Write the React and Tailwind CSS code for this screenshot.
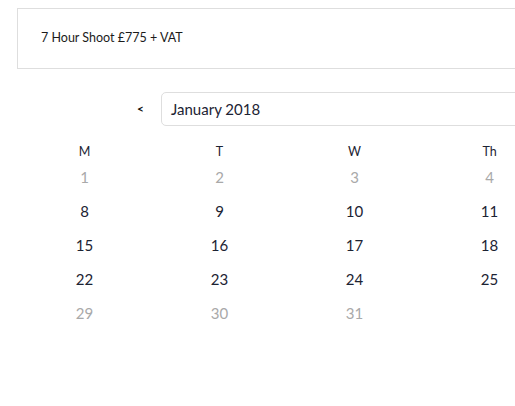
import React from "react";

const weeks = [
  [["1", true], ["2", true], ["3", true], ["4", true]],
  [["8"], ["9"], ["10"], ["11"]],
  [["15"], ["16"], ["17"], ["18"]],
  [["22"], ["23"], ["24"], ["25"]],
  [["29", true], ["30", true], ["31", true], [""]],
];

export default function App() {
  return (
    <div className="w-[515px] h-[406px] overflow-hidden bg-white" style={{ fontFamily: "Lato, 'Open Sans', sans-serif" }}>
      <div className="pt-2 pl-[17px]">
        <div className="w-[600px] h-[61px] border border-[#dedede] flex items-center pl-[23px] text-[12.5px] text-[#1b1b1b]">
          7 Hour Shoot £775 + VAT
        </div>
        <div className="mt-[23px] flex items-center">
          <div className="w-[144px] shrink-0 flex justify-end pr-[17px] text-[12px] font-bold text-[#111]">&lt;</div>
          <div className="w-[500px] shrink-0 h-[34px] border border-[#dedede] rounded-[5px] flex items-center pl-[9px] text-[15px] text-[#1c2333]">
            January 2018
          </div>
        </div>
        <div className="mt-[18px] grid grid-cols-[repeat(4,135px)] w-[540px]">
          {["M", "T", "W", "Th"].map((d) => (
            <div key={d} className="h-[16px] flex items-center justify-center text-[12.5px] text-[#1c2333]">{d}</div>
          ))}
        </div>
        <div>
          {weeks.map((w, i) => (
            <div key={i} className="grid grid-cols-[repeat(4,135px)] w-[540px] h-[34px]">
              {w.map(([n, muted], j) => (
                <div key={j} className={`flex items-center justify-center text-[15px] ${muted ? "text-[#a9a9a9]" : "text-[#1c2333]"}`}>{n}</div>
              ))}
            </div>
          ))}
        </div>
      </div>
    </div>
  );
}
